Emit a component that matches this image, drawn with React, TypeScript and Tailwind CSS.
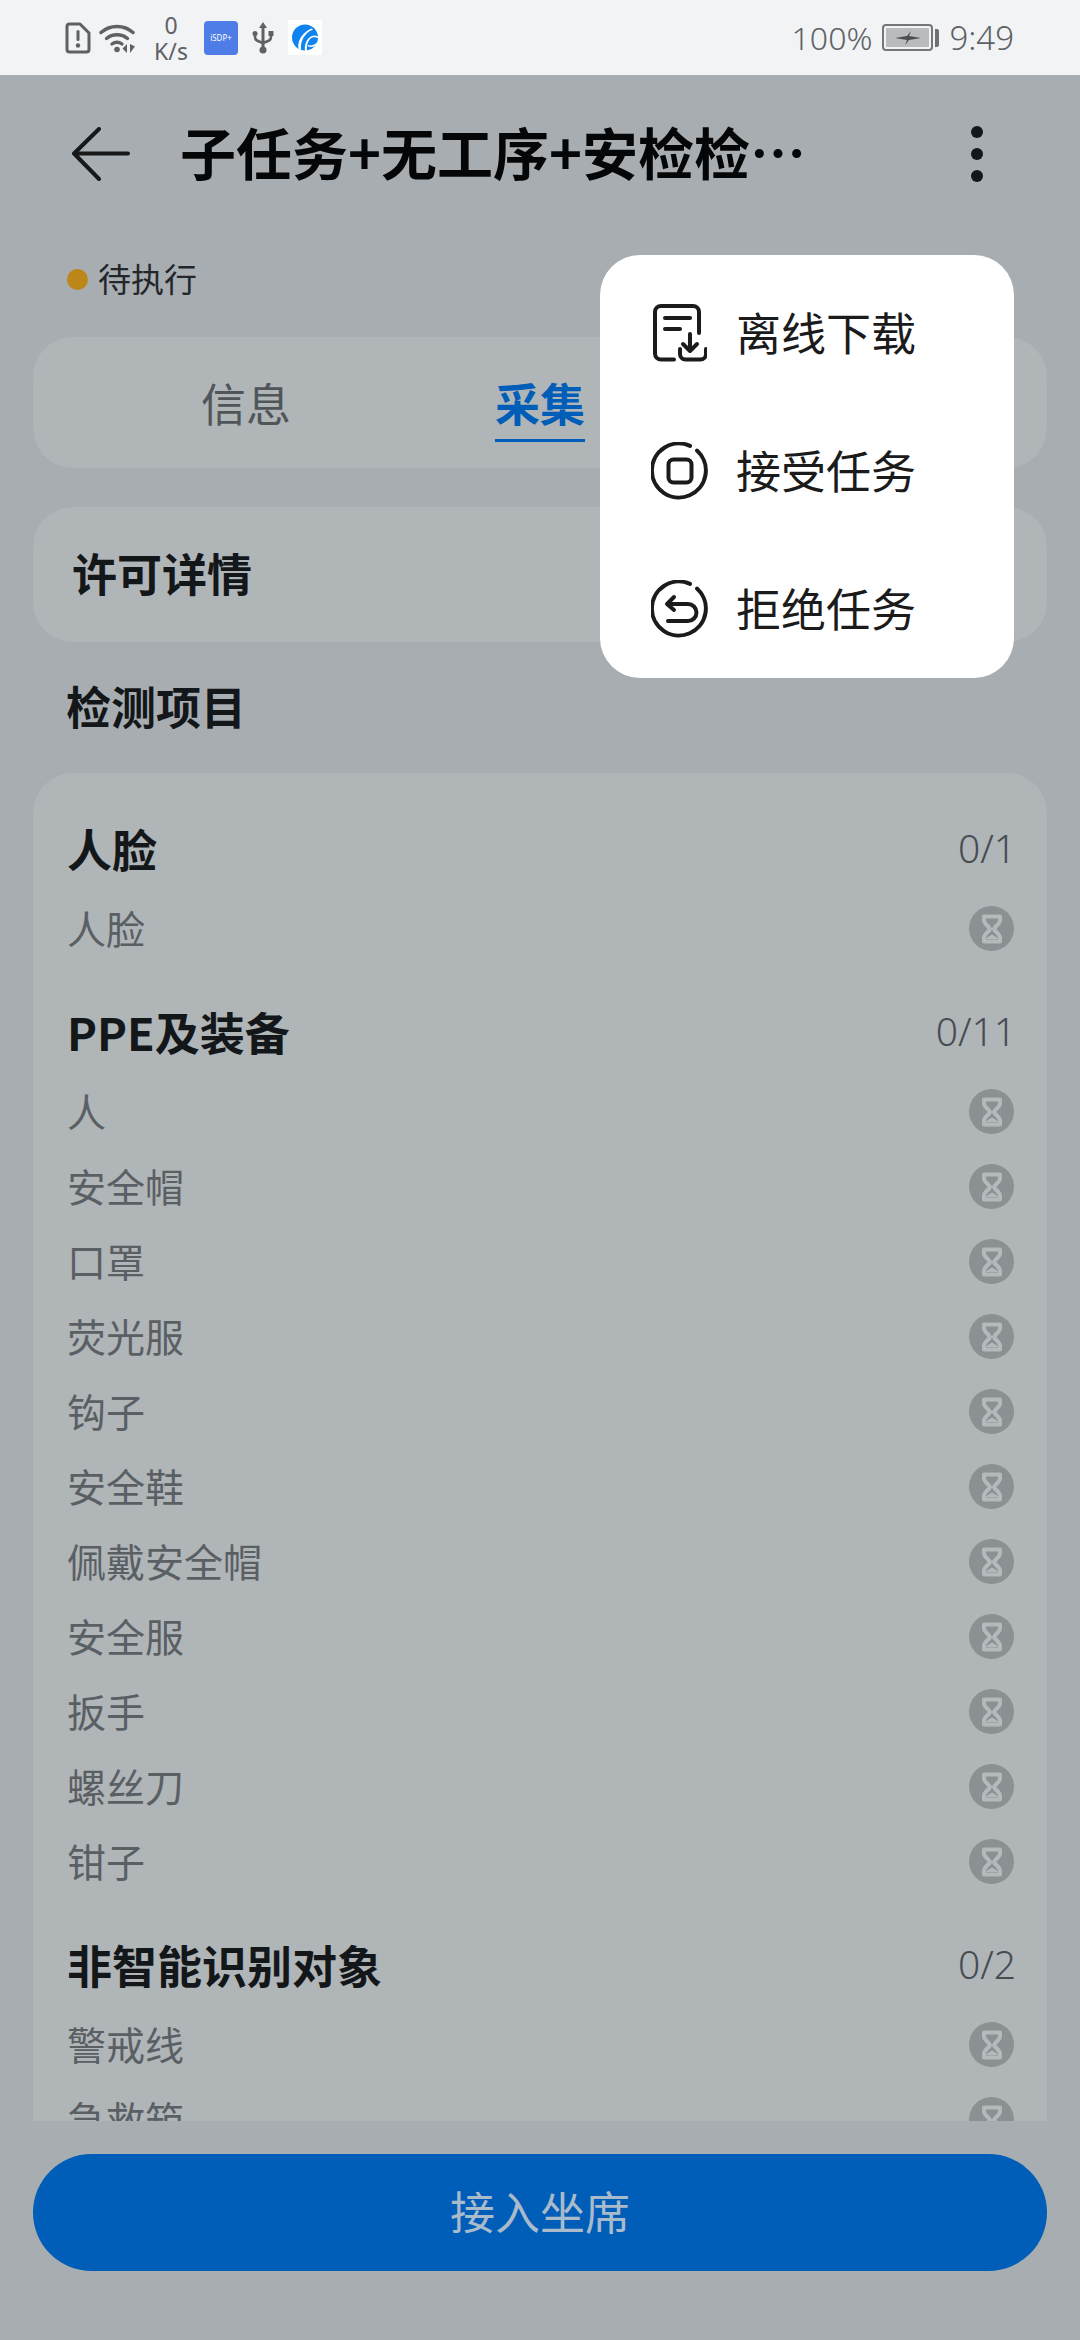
const sections = [
  { title: '人脸', count: '0/1', items: ['人脸'] },
  {
    title: 'PPE及装备',
    count: '0/11',
    items: ['人', '安全帽', '口罩', '荧光服', '钩子', '安全鞋', '佩戴安全帽', '安全服', '扳手', '螺丝刀', '钳子'],
  },
  { title: '非智能识别对象', count: '0/2', items: ['警戒线', '急救箱'] },
]

function SimAlertIcon() {
  return (
    <svg width="26" height="32" viewBox="0 0 26 32" fill="none">
      <path d="M2 4.500a2.500 2.500 0 0 1 2.500-2.500h10.500l9 9v16.500a2.500 2.500 0 0 1-2.500 2.500h-17a2.500 2.500 0 0 1-2.500-2.500z" stroke="#5f6265" strokeWidth="3" strokeLinejoin="round" />
      <rect x="11.500" y="8" width="3" height="11" rx="1.500" fill="#5f6265" />
      <circle cx="13" cy="23.500" r="2.200" fill="#5f6265" />
    </svg>
  )
}

function WifiIcon() {
  return (
    <svg width="38" height="32" viewBox="0 0 38 32" fill="none">
      <path d="M2 10.500C11 2.500 25 2.500 34 10.500" stroke="#5f6265" strokeWidth="3.400" strokeLinecap="round" />
      <path d="M7.500 16.500C13.500 11.500 22.500 11.500 28.500 16.500" stroke="#5f6265" strokeWidth="3.400" strokeLinecap="round" />
      <path d="M13 22C16 19.800 20 19.800 23 22" stroke="#5f6265" strokeWidth="3.400" strokeLinecap="round" />
      <circle cx="18" cy="27.500" r="2.800" fill="#5f6265" />
      <path d="M28 22v9l-4.500-4.500zM31 22v9l5-6.500z" fill="#5f6265" />
    </svg>
  )
}

function UsbIcon() {
  return (
    <svg width="22" height="33" viewBox="0 0 22 33" fill="none">
      <path d="M11 1l4 6h-8z" fill="#5f6265" />
      <path d="M11 5v23" stroke="#5f6265" strokeWidth="3" />
      <circle cx="11" cy="29" r="3.500" fill="#5f6265" />
      <path d="M3 12v4c0 3 2 4 8 6 6-2 8-3 8-6v-4" stroke="#5f6265" strokeWidth="2.600" />
      <rect x="0.500" y="10" width="5" height="5" rx="2.500" fill="#5f6265" />
      <rect x="16.500" y="10" width="5" height="5" fill="#5f6265" />
    </svg>
  )
}

function SwirlLogo() {
  return (
    <div className="flex h-[35px] w-[34px] items-center justify-center bg-white">
      <svg width="26" height="27" viewBox="0 0 26 27">
        <circle cx="13" cy="13.500" r="13" fill="#0f83ee" />
        <path d="M9 26C8 18 12 9 21 5.500l-1.500-1C11 8 5 16 6.500 25z" fill="#fff" />
        <path d="M13 27c-1-7 2-13 7-15 2-.8 4-.8 6 .5v1.500c-3-1.500-6-1-8 1-2.500 3-3.500 7-3 12z" fill="#fff" />
        <path d="M16 21c3 1 6 0 9-2.500l-.5 2c-2.500 2.500-5.500 3-8.500 2z" fill="#fff" />
      </svg>
    </div>
  )
}

function BatteryIcon() {
  return (
    <div className="flex items-center gap-[2px]">
      <div className="flex h-[27px] w-[51px] items-center justify-center rounded-[4px] border-2 border-[#74777a] p-[2px]">
        <div className="flex h-full w-full items-center justify-center rounded-[1px] bg-[#b9bbbd]">
          <svg width="26" height="14" viewBox="0 0 26 14">
            <path d="M0 7l12-2 4-5-2 5 12 2-12 2-4 5 2-5z" fill="#4d5053" />
          </svg>
        </div>
      </div>
      <div className="h-[18px] w-[4px] rounded-r-[2px] bg-[#6d7073]" />
    </div>
  )
}

function HourglassBadge() {
  return (
    <span className="mt-[2px] flex h-[45px] w-[45px] shrink-0 items-center justify-center rounded-full bg-[#8b9093]">
      <svg width="22" height="30" viewBox="0 0 22 30" fill="none">
        <path d="M3 2.500h16v4c0 3.500-5 5.500-6 8.500 1 3 6 5 6 8.500v4H3v-4c0-3.500 5-5.500 6-8.500-1-3-6-5-6-8.500z" stroke="#b4b9bc" strokeWidth="4" strokeLinejoin="round" />
        <path d="M5 25c1-2.500 4-3 6-4.500 2 1.500 5 2 6 4.500z" fill="#b4b9bc" />
      </svg>
    </span>
  )
}

function OfflineDownloadIcon() {
  return (
    <svg width="54" height="58" viewBox="0 0 54 58" fill="none" stroke="#1b1b1b" strokeWidth="4" strokeLinecap="round" strokeLinejoin="round">
      <path d="M21 55.500H8a6 6 0 0 1-6-6V8a6 6 0 0 1 6-6h32a6 6 0 0 1 6 6v21" />
      <path d="M12 14h25M12 25h15" />
      <path d="M37 30v17M30 40l7 7 7-7" />
      <path d="M27 45v5a5.500 5.500 0 0 0 5.500 5.500h15A5.500 5.500 0 0 0 53 50v-5" />
    </svg>
  )
}

function AcceptIcon() {
  return (
    <svg width="58" height="58" viewBox="0 0 58 58" fill="none" stroke="#1b1b1b" strokeWidth="4" strokeLinecap="round" strokeLinejoin="round">
      <path d="M46 8.500A27 27 0 1 1 39 3.900" />
      <rect x="17.500" y="17.500" width="23" height="23" rx="5" />
    </svg>
  )
}

function RejectIcon() {
  return (
    <svg width="58" height="58" viewBox="0 0 58 58" fill="none" stroke="#1b1b1b" strokeWidth="4" strokeLinecap="round" strokeLinejoin="round">
      <path d="M46 8.500A27 27 0 1 1 39 3.900" />
      <path d="M17 24h20a8.500 8.500 0 0 1 0 17H17" />
      <path d="M23 17l-7 7 7 6" />
    </svg>
  )
}

const menuItems = [
  { label: '离线下载', icon: <OfflineDownloadIcon /> },
  { label: '接受任务', icon: <AcceptIcon /> },
  { label: '拒绝任务', icon: <RejectIcon /> },
]

export default function App() {
  return (
    <div className="relative flex h-[2340px] w-[1080px] flex-col overflow-hidden bg-[#a8adb1] font-['Noto_Sans_CJK_SC','Noto_Sans',sans-serif]">
      {/* status bar */}
      <div className="flex h-[75px] items-center justify-between bg-[#f1f3f5] pl-[65px] pr-[66px] text-[#5f6265]">
        <div className="flex items-center">
          <SimAlertIcon />
          <span className="ml-[8px]"><WifiIcon /></span>
          <div className="ml-[14px] flex w-[40px] flex-col items-center font-['Noto_Sans',sans-serif] text-[23px] leading-[26px]">
            <span>0</span>
            <span>K/s</span>
          </div>
          <div className="ml-[13px] flex h-[34px] w-[34px] items-center justify-center rounded-[4px] bg-[#4f7de8] font-['Noto_Sans',sans-serif] text-[8px] text-white">
            iSDP+
          </div>
          <span className="ml-[14px]"><UsbIcon /></span>
          <span className="ml-[14px]"><SwirlLogo /></span>
        </div>
        <div className="flex items-center font-['Noto_Sans',sans-serif] text-[33px] font-light">
          <span className="text-[32px]">100%</span>
          <span className="ml-[10px]"><BatteryIcon /></span>
          <span className="ml-[10px]">9:49</span>
        </div>
      </div>

      {/* title bar */}
      <div className="flex h-[158px] items-center pl-[71px] pr-[66px]">
        <svg width="60" height="54" viewBox="0 0 60 54" fill="none" stroke="#16181a" strokeWidth="4" strokeLinecap="round" strokeLinejoin="round">
          <path d="M57 26.500H3M28 2L3 26.500 28 52" />
        </svg>
        <h1 className="ml-[49px] w-[642px] truncate pb-[6px] text-[56px] font-bold text-[#050607]">子任务+无工序+安检检测任务</h1>
        <div className="ml-auto mr-[31px] flex flex-col gap-[10px]">
          <span className="h-[12px] w-[12px] rounded-full bg-[#14171a]" />
          <span className="h-[12px] w-[12px] rounded-full bg-[#14171a]" />
          <span className="h-[12px] w-[12px] rounded-full bg-[#14171a]" />
        </div>
      </div>

      {/* task state */}
      <div className="flex h-[104px] items-center pb-[12px] pl-[67px] text-[33px] text-[#24272a]">
        <span className="h-[21px] w-[21px] rounded-full bg-[#bd8619]" />
        <span className="ml-[10px]">待执行</span>
      </div>

      <div className="mx-[33px] grid h-[131px] grid-cols-3 rounded-[40px] bg-[#b0b5b8] px-[66px]">
        <div className="flex items-center justify-center text-[45px] text-[#50555a]">信息</div>
        <div className="flex items-center justify-center">
          <span className="relative text-[45px] font-bold text-[#005db8]">
            采集
            <span className="absolute -bottom-[6px] left-0 h-[3px] w-full bg-[#005db8]" />
          </span>
        </div>
      </div>

      <div className="mx-[33px] mt-[39px] flex h-[135px] items-center rounded-[40px] bg-[#b0b5b8] pb-[3px] pl-[39px] text-[45px] font-bold text-[#14171a]">
        许可详情
      </div>

      <h2 className="flex h-[131px] items-center pb-[3px] pl-[66px] text-[45px] font-bold text-[#14171a]">检测项目</h2>

      {/* detection checklist, cut off by the bottom action bar */}
      <div className="mx-[33px] h-[1348px] overflow-hidden rounded-t-[40px] bg-[#b0b5b8] pl-[34px] pr-[33px] pt-[34px]">
        {sections.map((section, index) => (
          <section key={section.title} className={index > 0 ? 'mt-[25px]' : ''}>
            <div className="flex h-[83px] items-center justify-between">
              <h3 className="text-[45px] font-bold text-[#14171a]">{section.title}</h3>
              <span className="-mr-[2px] font-['Noto_Sans',sans-serif] text-[39px] font-light text-[#474c51]">{section.count}</span>
            </div>
            {section.items.map((item) => (
              <div key={item} className="flex h-[75px] items-center justify-between">
                <span className="text-[39px] text-[#5a5f64]">{item}</span>
                <HourglassBadge />
              </div>
            ))}
          </section>
        ))}
      </div>

      <div className="mx-[33px] mt-[33px] flex h-[117px] items-center justify-center rounded-full bg-[#005db8] pb-[4px] text-[45px] text-[#a9bacb]">
        接入坐席
      </div>

      {/* overflow menu, open over the dimmed page */}
      <div className="absolute left-[600px] top-[255px] h-[423px] w-[414px] rounded-[40px] bg-white pt-[9px]">
        {menuItems.map((item) => (
          <div key={item.label} className="flex h-[138px] items-center pl-[51px] text-[45px] text-[#1b1b1b]">
            <span className="flex w-[58px] justify-center">{item.icon}</span>
            <span className="ml-[27px] pb-[2px]">{item.label}</span>
          </div>
        ))}
      </div>
    </div>
  )
}
